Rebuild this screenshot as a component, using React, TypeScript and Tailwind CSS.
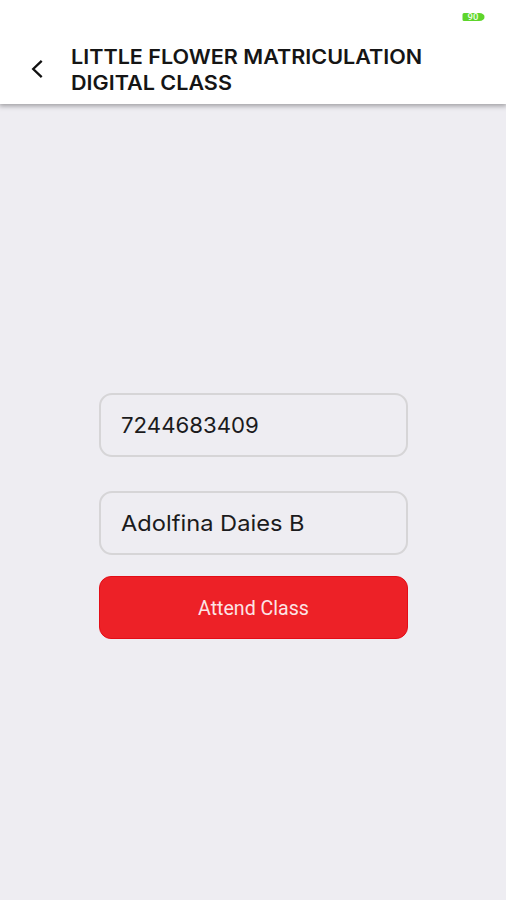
import React from "react";
import { clsx } from "clsx";

export interface FieldProps extends React.HTMLAttributes<HTMLDivElement> {}

const Field = ({ className, ...props }: FieldProps) => {
  return (
    <div
      {...props}
      className={clsx(
        "flex h-16 w-full items-center whitespace-nowrap rounded-[13px] border-2 border-[#d6d5d7] pl-5 text-[22px] leading-none text-[#1b1b1d]",
        className
      )}
    />
  );
};

const Battery = () => {
  return (
    <svg width="24" height="12" viewBox="0 0 24 12" role="img" aria-label="Battery">
      <path
        d="M3 2H18Q23.500 2.300 23.500 6T18 10H3Q1.500 10 1.500 8.500V3.500Q1.500 2 3 2Z"
        fill="#5ed52b"
      />
      <text
        x="12"
        y="9.400"
        textAnchor="middle"
        fontSize="9.500"
        fontWeight="500"
        fill="#effde9"
        fontFamily="Roboto, sans-serif"
      >
        90
      </text>
    </svg>
  );
};

const Header = () => {
  return (
    <header className="z-10 h-[104px] w-full shrink-0 bg-white shadow-[0_1px_5px_1px_rgba(0,0,0,0.34)]">
      <div className="flex h-[43px] justify-end pr-[21px] pt-[11px]">
        <Battery />
      </div>
      <div className="flex">
        <button type="button" aria-label="Back" className="ml-[30px] mt-[15px] h-[22px] w-[15px]">
          <svg width="15" height="22" viewBox="0 0 15 22" fill="none">
            <path d="M11.700 2.800L3.200 11L11.700 19.200" stroke="#111" strokeWidth="2.300" />
          </svg>
        </button>
        <h1 className="ml-[26px] mt-px origin-left scale-x-[1.078] whitespace-nowrap text-[20px] font-semibold leading-[26px] text-[#151515]">
          <span className="block">LITTLE FLOWER MATRICULATION</span>
          <span className="block">DIGITAL CLASS</span>
        </h1>
      </div>
    </header>
  );
};

export default function App() {
  return (
    <div className="flex h-[900px] w-[506px] flex-col overflow-hidden bg-[#eeedf2] font-['Inter',sans-serif]">
      <Header />
      <main className="ml-[99px] mt-[289px] flex w-[309px] flex-col">
        <Field>
          <span className="origin-left scale-x-[1.01]">7244683409</span>
        </Field>
        <Field className="mt-[34px]">
          <span className="origin-left scale-x-[1.075]">Adolfina Daies B</span>
        </Field>
        <button
          type="button"
          className="mt-[21px] h-[63px] w-full rounded-xl border border-[#e30d17] bg-[#ed2127] pt-[3px] font-['Roboto',sans-serif] text-[19.600px] text-[#fce4e5]"
        >
          Attend Class
        </button>
      </main>
    </div>
  );
}
